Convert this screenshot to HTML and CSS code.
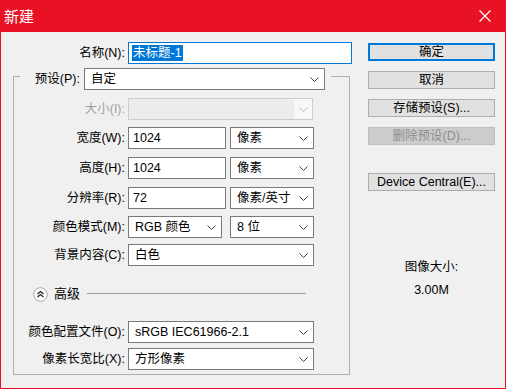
FILE: index.html
```html
<!DOCTYPE html>
<html lang="zh-CN">
<head>
  <meta charset="UTF-8" />
  <title>新建</title>
  <link rel="stylesheet" href="styles.css">
</head>
<body>
  <div class="window">
    <!-- Title Bar -->
    <div class="titlebar">
      <span class="title">新建</span>
      <svg class="close" width="12" height="12" viewBox="0 0 12 12"><path d="M0.5 0.5L11.5 11.5M11.5 0.5L0.5 11.5" stroke="#fff" stroke-width="1.2" fill="none"/></svg>
    </div>

    <div class="dialog">
      <!-- Left: form -->
      <div class="main">
        <div class="row name-row">
          <span class="label">名称(N):</span>
          <div class="field name-field"><span class="selected">未标题-1</span></div>
        </div>

        <div class="group">
          <div class="preset-row">
            <span class="preset-label">预设(P):</span>
            <div class="select preset-select"><span>自定</span>
              <svg class="chev" width="9" height="5" viewBox="0 0 9 5"><polyline points="0.5,0.5 4.5,4.5 8.5,0.5"/></svg>
            </div>
          </div>

          <div class="row row-size disabled">
            <span class="label">大小(I):</span>
            <div class="select size-select"><span></span>
              <span class="arrow-box"><svg class="chev" width="9" height="5" viewBox="0 0 9 5"><polyline points="0.5,0.5 4.5,4.5 8.5,0.5"/></svg></span>
            </div>
          </div>

          <div class="row row-width">
            <span class="label">宽度(W):</span>
            <div class="field num-field">1024</div>
            <div class="select unit-select"><span>像素</span>
              <svg class="chev" width="9" height="5" viewBox="0 0 9 5"><polyline points="0.5,0.5 4.5,4.5 8.5,0.5"/></svg>
            </div>
          </div>

          <div class="row row-height">
            <span class="label">高度(H):</span>
            <div class="field num-field">1024</div>
            <div class="select unit-select"><span>像素</span>
              <svg class="chev" width="9" height="5" viewBox="0 0 9 5"><polyline points="0.5,0.5 4.5,4.5 8.5,0.5"/></svg>
            </div>
          </div>

          <div class="row row-res">
            <span class="label">分辨率(R):</span>
            <div class="field num-field">72</div>
            <div class="select unit-select"><span>像素/英寸</span>
              <svg class="chev" width="9" height="5" viewBox="0 0 9 5"><polyline points="0.5,0.5 4.5,4.5 8.5,0.5"/></svg>
            </div>
          </div>

          <div class="row row-mode">
            <span class="label">颜色模式(M):</span>
            <div class="select mode-select"><span>RGB 颜色</span>
              <svg class="chev" width="9" height="5" viewBox="0 0 9 5"><polyline points="0.5,0.5 4.5,4.5 8.5,0.5"/></svg>
            </div>
            <div class="select unit-select"><span>8 位</span>
              <svg class="chev" width="9" height="5" viewBox="0 0 9 5"><polyline points="0.5,0.5 4.5,4.5 8.5,0.5"/></svg>
            </div>
          </div>

          <div class="row row-bg">
            <span class="label">背景内容(C):</span>
            <div class="select wide-select"><span>白色</span>
              <svg class="chev" width="9" height="5" viewBox="0 0 9 5"><polyline points="0.5,0.5 4.5,4.5 8.5,0.5"/></svg>
            </div>
          </div>

          <!-- Advanced toggle -->
          <div class="advanced">
            <svg class="adv-icon" width="15" height="15" viewBox="0 0 15 15">
              <circle cx="7.5" cy="7.5" r="6.8" fill="#fdfdfd" stroke="#a8a8a8"/>
              <polyline points="4.5,7 7.5,4.5 10.5,7" fill="none" stroke="#222" stroke-width="1.2"/>
              <polyline points="4.5,10 7.5,7.5 10.5,10" fill="none" stroke="#222" stroke-width="1.2"/>
            </svg>
            <span class="adv-text">高级</span>
            <span class="adv-line"></span>
          </div>

          <div class="row row-profile">
            <span class="label">颜色配置文件(O):</span>
            <div class="select wide-select"><span>sRGB IEC61966-2.1</span>
              <svg class="chev" width="9" height="5" viewBox="0 0 9 5"><polyline points="0.5,0.5 4.5,4.5 8.5,0.5"/></svg>
            </div>
          </div>

          <div class="row row-aspect">
            <span class="label">像素长宽比(X):</span>
            <div class="select wide-select"><span>方形像素</span>
              <svg class="chev" width="9" height="5" viewBox="0 0 9 5"><polyline points="0.5,0.5 4.5,4.5 8.5,0.5"/></svg>
            </div>
          </div>
        </div>
      </div>

      <!-- Right: buttons -->
      <div class="side">
        <button class="btn btn-default">确定</button>
        <button class="btn">取消</button>
        <button class="btn">存储预设(S)...</button>
        <button class="btn" disabled>删除预设(D)...</button>
        <button class="btn btn-device">Device Central(E)...</button>

        <div class="info">
          <p>图像大小:</p>
          <p class="info-size">3.00M</p>
        </div>
      </div>
    </div>
  </div>
</body>
</html>
```

FILE: styles.css
```css
/* Global Styles */
* {
  margin: 0;
  padding: 0;
  box-sizing: border-box;
}
body {
  font-family: 'Liberation Sans', 'Noto Sans CJK SC', sans-serif;
  font-size: 12.5px;
  line-height: 16px;
  color: #000;
  background: #f0f0f0;
}

/* Window */
.window {
  width: 506px;
  height: 389px;
  display: flex;
  flex-direction: column;
  border: 1px solid #e81224;
  border-top: none;
  background: #f0f0f0;
}
.titlebar {
  height: 32px;
  flex: none;
  display: flex;
  align-items: center;
  justify-content: space-between;
  padding: 0 15px 0 4px;
  margin: 0 -1px;
  background: #e81224;
}
.title {
  color: #fff;
  font-size: 15px;
  line-height: 20px;
  font-family: 'Noto Sans CJK SC', sans-serif;
}
.close {
  display: block;
}

/* Dialog body */
.dialog {
  flex: 1;
  display: flex;
  align-items: flex-start;
  padding: 10px 0 0 12px;
}
.main {
  width: 339px;
}

/* Rows */
.row {
  display: flex;
  align-items: center;
  height: 22px;
}
.label {
  width: 111px;
  margin-right: 3px;
  text-align: right;
  white-space: nowrap;
}
.name-row .label {
  width: 112px;
}
.disabled .label {
  color: #a0a0a0;
}
.row-size { margin-top: 8px; }
.row-width { margin-top: 7px; }
.row-height { margin-top: 8px; }
.row-res { margin-top: 8px; }
.row-mode { margin-top: 7px; }
.row-bg { margin-top: 6px; }
.row-profile { margin-top: 19px; }
.row-aspect { margin-top: 5px; }

/* Text fields */
.field {
  height: 22px;
  border: 1px solid #7a7a7a;
  background: #fff;
  padding: 2px 4px;
  line-height: 16px;
  white-space: nowrap;
}
.name-field {
  width: 224px;
  border-color: #0078d7;
  padding-left: 3px;
}
.selected {
  display: inline-block;
  background: #0078d7;
  color: #fff;
  padding: 0 1px;
  line-height: 16px;
}
.num-field {
  width: 98px;
  margin-right: 4px;
}

/* Dropdowns */
.select {
  height: 22px;
  display: flex;
  align-items: center;
  justify-content: space-between;
  padding: 0 5px 0 6px;
  border: 1px solid #7a7a7a;
  background: #fff;
  white-space: nowrap;
}
.chev {
  display: block;
  flex: none;
  fill: none;
  stroke: #3c3c3c;
  stroke-width: 1;
}
.unit-select { width: 84px; }
.mode-select { width: 94px; margin-right: 8px; }
.wide-select { width: 186px; }
.size-select {
  width: 185px;
  padding: 0;
  border-color: #cccccc;
  background: #ececec;
}
.arrow-box {
  height: 100%;
  width: 18px;
  display: flex;
  align-items: center;
  justify-content: center;
  background: #f7f7f7;
}
.size-select .chev {
  stroke: #bdbdbd;
}

/* Group box */
.group {
  margin-top: 12px;
  width: 337px;
  border: 1px solid #adadad;
  padding-bottom: 4px;
}
.preset-row {
  display: flex;
  align-items: center;
  width: 311px;
  height: 22px;
  margin: -9px 0 0 6px;
  padding-right: 6px;
  background: #f0f0f0;
}
.preset-label {
  flex: 1;
  margin-right: 4px;
  text-align: right;
  white-space: nowrap;
}
.preset-select {
  width: 241px;
}

/* Advanced toggle */
.advanced {
  display: flex;
  align-items: center;
  height: 16px;
  margin-top: 20px;
  padding-left: 19px;
}
.adv-icon {
  display: block;
  flex: none;
}
.adv-text {
  margin-left: 6px;
  font-size: 13px;
}
.adv-line {
  width: 219px;
  height: 1px;
  margin: 0 0 2px 7px;
  background: #a0a0a0;
}

/* Side buttons */
.side {
  width: 127px;
  margin-left: 16px;
  padding-top: 1px;
  display: flex;
  flex-direction: column;
  gap: 10px;
}
.btn {
  height: 18px;
  width: 127px;
  border: 1px solid #adadad;
  background: #e1e1e1;
  font-family: inherit;
  font-size: 12.5px;
  line-height: 14px;
  color: #000;
}
.btn-default {
  border: 2px solid #0078d7;
}
.btn:disabled {
  background: #cccccc;
  border-color: #bfbfbf;
  color: #8c8c8c;
}
.btn-device {
  margin-top: 18px;
}
.info {
  margin-top: 58px;
  text-align: center;
}
.info-size {
  margin-top: 7px;
}
```
